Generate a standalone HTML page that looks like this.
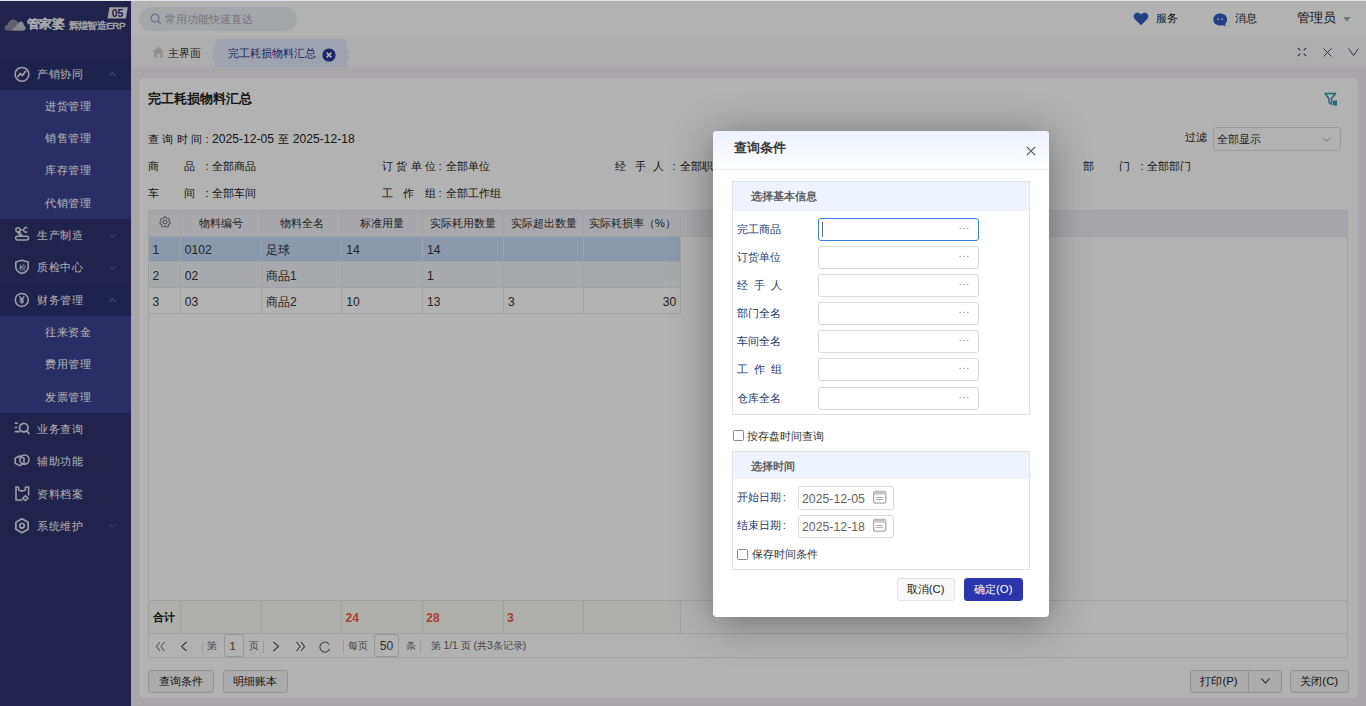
<!DOCTYPE html>
<html><head><meta charset="utf-8">
<style>
*{box-sizing:border-box;margin:0;padding:0}
html,body{width:1366px;height:706px;overflow:hidden;background:#f2f0f2;font-family:"Liberation Sans",sans-serif;}
.a{position:absolute;white-space:nowrap}
#root{position:absolute;left:0;top:0;width:1366px;height:706px;overflow:hidden}
/* sidebar */
#side{position:absolute;left:0;top:0;width:131px;height:706px;background:#30336f}
.mi{position:absolute;left:0;width:131px;height:32.3px;color:#fafaff;font-size:11.4px;line-height:32.3px}
.mi .t{position:absolute;left:37px;top:0;letter-spacing:0.5px}
.sub{position:absolute;left:0;width:131px;background:#3e4290}
.si{position:absolute;left:45px;color:#ffffff;font-size:11.4px;line-height:32.3px;letter-spacing:0.5px}
.car{position:absolute;left:109px;width:7px;height:7px}
#topbar{position:absolute;left:131px;top:0;width:1235px;height:35.5px;background:#ffffff;border-top:1px solid #fff}
#tabbar{position:absolute;left:131px;top:35.5px;width:1235px;height:31px;background:#f9f9f9}
#card{position:absolute;left:139px;top:78px;width:1219px;height:619.5px;background:#fff;border-radius:5px}
.txt{font-size:11.4px;color:#333}
.th{position:absolute;top:209.4px;height:26.6px;line-height:26.6px;font-size:11.4px;color:#333;text-align:center}
.vl{position:absolute;width:1px;background:#e2e2e2}
.hl{position:absolute;height:1px;background:#e2e2e2}
.cell{position:absolute;font-size:11.4px;color:#333;line-height:26px}
#overlay{position:absolute;left:0;top:0;width:1366px;height:706px;background:rgba(0,0,0,0.3)}
#modal{position:absolute;left:713px;top:131px;width:336px;height:486px;background:#fff;border-radius:4px;box-shadow:0 5px 40px rgba(0,0,0,0.38)}
.lbl{position:absolute;left:24px;font-size:11.4px;color:#34446e;line-height:23px}
.inp{position:absolute;left:105px;width:161px;height:23px;border:1px solid #dcdcdc;border-radius:3px;background:#fff}
.inp .dots{position:absolute;right:9px;top:4px;font-size:10px;color:#aaa;letter-spacing:0.5px}
</style></head><body>
<div id="root">
<!-- SIDEBAR -->

<div id="side">
 <!-- logo -->
 <svg class="a" style="left:3.5px;top:17px" width="22" height="14" viewBox="0 0 22 14">
  <path d="M3.5 13.5 C1.2 13.5 0.2 11.6 0.8 10 C1.3 8.6 2.5 8 3.6 8.1 C3.8 5 6 2.5 9.2 2.5 C11.5 2.5 13.2 3.8 14 5.6 C14.8 4.6 16.2 4.3 17.4 4.8 C19 5.4 19.8 7 19.6 8.6 C21 8.9 21.8 10.3 21.4 11.8 C21.1 12.8 20.3 13.5 19.2 13.5 Z" fill="#8a8ca6"/>
  <path d="M7.5 13.5 L15.5 5.6 C16.3 4.8 17.6 4.6 18.5 5.2 C19.5 5.9 19.9 7.2 19.6 8.6 C21 8.9 21.8 10.3 21.4 11.8 C21.1 12.8 20.3 13.5 19.2 13.5 Z" fill="#c2c3d0"/>
 </svg>
 <div class="a" style="left:26.5px;top:15.5px;font-size:13.4px;color:#f4f5fa;letter-spacing:-0.4px;line-height:16px;-webkit-text-stroke:0.7px #f4f5fa;transform:scaleY(0.92);transform-origin:0 100%">管家婆</div>
 <div class="a" style="left:68.5px;top:19.5px;font-size:9.9px;color:#eeeff5;line-height:12px;letter-spacing:-0.55px;-webkit-text-stroke:0.35px #eeeff5">辉煌智造ERP</div>
 <svg class="a" style="left:106.5px;top:6.5px" width="21" height="12" viewBox="0 0 21 12">
  <path d="M2.5 0.3 H20.8 L18.8 11.5 H0.5 Z" fill="#e4e6ee"/>
  <text x="10.5" y="10" text-anchor="middle" font-family="Liberation Sans" font-weight="bold" font-size="11" fill="#2a2c5e" transform="scale(0.95,1)" transform-origin="10.5 6">05</text>
 </svg>

 <!-- 产销协同 -->
 <div class="mi" style="top:57.7px;background:#2f3270">
  <svg class="a" style="left:12.5px;top:7px" width="18" height="18" viewBox="0 0 18 18"><circle cx="9" cy="9.3" r="6.9" fill="none" stroke="#e2e3ee" stroke-width="1.55"/><path d="M4.6 12.2 L7.2 8.4 L9.4 10.6 L12.3 6.6" fill="none" stroke="#e2e3ee" stroke-width="1.65" stroke-linejoin="round"/><circle cx="12.6" cy="6.3" r="0.9" fill="#e2e3ee"/></svg>
  <div class="t">产销协同</div>
  <svg class="car" style="top:13.5px" viewBox="0 0 8 8"><path d="M0.5 5.5 L4 2 L7.5 5.5" fill="none" stroke="#8c8eaa" stroke-width="1.1"/></svg>
 </div>
 <div class="sub" style="top:89.9px;height:129.2px">
  <div class="si" style="top:0">进货管理</div>
  <div class="si" style="top:32.3px">销售管理</div>
  <div class="si" style="top:64.6px">库存管理</div>
  <div class="si" style="top:96.9px">代销管理</div>
 </div>
 <div class="mi" style="top:219.1px">
  <svg class="a" style="left:12.5px;top:7px" width="18" height="18" viewBox="0 0 18 18"><circle cx="5" cy="3.8" r="2.1" fill="none" stroke="#e2e3ee" stroke-width="1.45"/><path d="M6.2 5.6 L9.6 10.6 M4.6 6.2 L7.6 10.6" fill="none" stroke="#e2e3ee" stroke-width="1.45"/><path d="M14.3 2.2 A2.2 2.2 0 1 0 14.3 5.6" fill="none" stroke="#e2e3ee" stroke-width="1.45"/><path d="M7 3.9 H9.8" stroke="#e2e3ee" stroke-width="1.45"/><rect x="2.6" y="10.3" width="13" height="3.6" rx="1.8" fill="none" stroke="#e2e3ee" stroke-width="1.45"/></svg>
  <div class="t">生产制造</div>
  <svg class="car" style="top:12.5px" viewBox="0 0 8 8"><path d="M0.5 2.5 L4 6 L7.5 2.5" fill="none" stroke="#6f7194" stroke-width="1.1"/></svg>
 </div>
 <div class="mi" style="top:251.4px">
  <svg class="a" style="left:12.5px;top:7px" width="18" height="18" viewBox="0 0 18 18"><path d="M9 2.2 L15.2 4 V9 C15.2 12 12.6 14.3 9 15.6 C5.4 14.3 2.8 12 2.8 9 V4 Z" fill="none" stroke="#e2e3ee" stroke-width="1.55" stroke-linejoin="round"/><text x="9" y="11.6" text-anchor="middle" font-size="7" fill="#e2e3ee">检</text></svg>
  <div class="t">质检中心</div>
  <svg class="car" style="top:12.5px" viewBox="0 0 8 8"><path d="M0.5 2.5 L4 6 L7.5 2.5" fill="none" stroke="#6f7194" stroke-width="1.1"/></svg>
 </div>
 <div class="mi" style="top:283.7px;background:#2f3270">
  <svg class="a" style="left:12.5px;top:7px" width="18" height="18" viewBox="0 0 18 18"><circle cx="8.8" cy="8.9" r="6.5" fill="none" stroke="#e2e3ee" stroke-width="1.55"/><path d="M6.3 5.2 L8.8 8.4 L11.3 5.2 M8.8 8.4 V12.8 M6.6 8.9 H11 M6.6 10.8 H11" fill="none" stroke="#e2e3ee" stroke-width="1.35"/></svg>
  <div class="t">财务管理</div>
  <svg class="car" style="top:13.5px" viewBox="0 0 8 8"><path d="M0.5 5.5 L4 2 L7.5 5.5" fill="none" stroke="#8c8eaa" stroke-width="1.1"/></svg>
 </div>
 <div class="sub" style="top:316px;height:96.9px">
  <div class="si" style="top:0">往来资金</div>
  <div class="si" style="top:32.3px">费用管理</div>
  <div class="si" style="top:64.6px">发票管理</div>
 </div>
 <div class="mi" style="top:412.9px">
  <svg class="a" style="left:12.5px;top:7px" width="18" height="18" viewBox="0 0 18 18"><path d="M1.8 3.2 H5 M1.8 7.4 H4.2 M1.8 11.6 H7" fill="none" stroke="#e2e3ee" stroke-width="1.55"/><circle cx="10.8" cy="7.6" r="4.3" fill="none" stroke="#e2e3ee" stroke-width="1.65"/><path d="M13.8 10.9 L16 13.6" stroke="#e2e3ee" stroke-width="1.70" stroke-linecap="round"/></svg>
  <div class="t">业务查询</div>
 </div>
 <div class="mi" style="top:445.2px">
  <svg class="a" style="left:12.5px;top:7px" width="18" height="18" viewBox="0 0 18 18"><path d="M6.6 4 L11 6.3 V11.3 L6.6 13.6 L2.2 11.3 V6.3 Z" fill="none" stroke="#e2e3ee" stroke-width="1.55" stroke-linejoin="round"/><circle cx="11.4" cy="7.6" r="4.6" fill="none" stroke="#e2e3ee" stroke-width="1.55"/></svg>
  <div class="t">辅助功能</div>
 </div>
 <div class="mi" style="top:477.5px">
  <svg class="a" style="left:12.5px;top:7px" width="18" height="18" viewBox="0 0 18 18"><path d="M5.6 1.9 H3 V15 H9.5 M15.6 10.5 V1.9 H12.4" fill="none" stroke="#e2e3ee" stroke-width="1.55"/><path d="M5.6 1.9 V4.6 C5.6 6.3 12.4 6.3 12.4 4.6 V1.9" fill="none" stroke="#e2e3ee" stroke-width="1.55"/><path d="M12.4 10.8 L15 13.2 L12.4 15.6 L9.8 13.2 Z" fill="none" stroke="#e2e3ee" stroke-width="1.45"/></svg>
  <div class="t">资料档案</div>
 </div>
 <div class="mi" style="top:509.8px">
  <svg class="a" style="left:12.5px;top:7px" width="18" height="18" viewBox="0 0 18 18"><path d="M9 1.8 L15.1 5.3 V12.3 L9 15.8 L2.9 12.3 V5.3 Z" fill="none" stroke="#e2e3ee" stroke-width="1.65" stroke-linejoin="round"/><circle cx="9" cy="8.8" r="2.3" fill="none" stroke="#e2e3ee" stroke-width="1.65"/></svg>
  <div class="t">系统维护</div>
  <svg class="car" style="top:12.5px" viewBox="0 0 8 8"><path d="M0.5 2.5 L4 6 L7.5 2.5" fill="none" stroke="#6f7194" stroke-width="1.1"/></svg>
 </div>
</div>

<!-- TOPBAR -->

<div id="topbar">
 <div class="a" style="left:8px;top:5.5px;width:158px;height:24px;border-radius:12px;background:#eceef4"></div>
 <svg class="a" style="left:18.5px;top:11.5px" width="12" height="12" viewBox="0 0 12 12"><circle cx="5" cy="5" r="3.9" fill="none" stroke="#9aa2c4" stroke-width="1.2"/><path d="M7.8 7.8 L10.8 10.8" stroke="#9aa2c4" stroke-width="1.3"/></svg>
 <div class="a" style="left:33.5px;top:11px;font-size:11.4px;line-height:14px;color:#a8a8ae">常用功能快速直达</div>
 <svg class="a" style="left:1002px;top:10.8px" width="16" height="14" viewBox="0 0 16 14"><path d="M8 13.3 L1.6 6.9 C0 5.2 0.4 2.2 2.7 1.1 C4.6 0.3 6.6 0.9 8 2.5 C9.4 0.9 11.4 0.3 13.3 1.1 C15.6 2.2 16 5.2 14.4 6.9 Z" fill="#2e5dbc"/><path d="M3.6 5.6 L6 3.3" stroke="#b3b3b3" stroke-width="1.2" stroke-linecap="round" opacity="0.0"/></svg>
 <div class="a" style="left:1025px;top:10px;font-size:11.4px;line-height:14px;color:#222">服务</div>
 <svg class="a" style="left:1081.5px;top:11.5px" width="15" height="14" viewBox="0 0 15 14"><path d="M7.2 0.4 C11.2 0.4 14.1 3 14.1 6.4 C14.1 8.3 13.3 9.8 12 10.9 L13 13.4 L9.6 12.3 C8.8 12.5 8 12.6 7.2 12.6 C3.2 12.6 0.3 9.9 0.3 6.5 C0.3 3.1 3.2 0.4 7.2 0.4 Z" fill="#2e5dbc"/><rect x="4.3" y="5.4" width="1.6" height="1.6" fill="#dfe3ee"/><rect x="8.5" y="5.4" width="1.6" height="1.6" fill="#dfe3ee"/></svg>
 <div class="a" style="left:1104px;top:10px;font-size:11.4px;line-height:14px;color:#222">消息</div>
 <div class="a" style="left:1166px;top:9px;font-size:13.3px;line-height:15px;color:#222">管理员</div>
 <svg class="a" style="left:1211.5px;top:15.5px" width="8" height="5" viewBox="0 0 8 5"><path d="M0 0 H8 L4 4.5 Z" fill="#a3a8c0"/></svg>
</div>
<div id="tabbar">
 <svg class="a" style="left:20.5px;top:10.5px" width="13" height="12" viewBox="0 0 13 12"><path d="M6.5 0.5 L0.5 6 H2.3 V11.5 H5.2 V8 H7.8 V11.5 H10.7 V6 H12.5 Z" fill="#d2d2d2"/></svg>
 <div class="a" style="left:37px;top:10px;font-size:11.4px;line-height:14px;color:#333">主界面</div>
 <div class="a" style="left:82px;top:14.5px;width:1px;height:9px;background:#ddd"></div>
 <div class="a" style="left:83.5px;top:3.5px;width:132.5px;height:27.5px;background:#e4e8fb;border-radius:6px 6px 0 0"></div>
 <div class="a" style="left:96.5px;top:10px;font-size:11.4px;line-height:14px;color:#2d3590">完工耗损物料汇总</div>
 <svg class="a" style="left:190.5px;top:12px" width="14" height="14" viewBox="0 0 14 14"><circle cx="7" cy="7" r="6.6" fill="#2a3595"/><path d="M4.6 4.6 L9.4 9.4 M9.4 4.6 L4.6 9.4" stroke="#fff" stroke-width="1.6"/></svg>
 <div class="a" style="left:216.5px;top:14.5px;width:1px;height:9px;background:#ddd"></div>
 <svg class="a" style="left:1166px;top:11.5px" width="10" height="10" viewBox="0 0 10 10"><path d="M0.8 0.8 L3.3 3.3 M9.2 0.8 L6.7 3.3 M0.8 9.2 L3.3 6.7 M9.2 9.2 L6.7 6.7" stroke="#4a4e62" stroke-width="1.2"/></svg>
 <svg class="a" style="left:1192px;top:12px" width="9" height="9" viewBox="0 0 9 9"><path d="M0.5 0.5 L8.5 8.5 M8.5 0.5 L0.5 8.5" stroke="#4a4e62" stroke-width="1"/></svg>
 <svg class="a" style="left:1217px;top:12.5px" width="11" height="8" viewBox="0 0 11 8"><path d="M0.5 0.5 L5.5 7.5 L10.5 0.5" fill="none" stroke="#4a4e62" stroke-width="1"/></svg>
</div>

<!-- CARD -->
<div class="a" style="left:139px;top:78px;width:1219px;height:619.5px;background:#fff;border-radius:5px"></div>
<div class="a" style="left:148px;top:90px;font-size:13.3px;line-height:17px;color:#222;font-weight:bold">完工耗损物料汇总</div>
<svg class="a" style="left:1324px;top:92px" width="14" height="14" viewBox="0 0 14 14"><path d="M1 1.5 H11.5 L7.5 6.5 V12.5 L5 10.5 V6.5 Z" fill="none" stroke="#2a97a8" stroke-width="1.5" stroke-linejoin="round"/><rect x="9" y="8.5" width="4" height="5" fill="#2a97a8"/></svg>
<div class="a" style="left:148px;top:132px;font-size:11.4px;line-height:14px;color:#222;">查</div>
<div class="a" style="left:161.7px;top:132px;font-size:11.4px;line-height:14px;color:#222;">询</div>
<div class="a" style="left:177px;top:132px;font-size:11.4px;line-height:14px;color:#222;">时</div>
<div class="a" style="left:190.7px;top:132px;font-size:11.4px;line-height:14px;color:#222;">间</div>
<div class="a" style="left:205.5px;top:132px;font-size:11.4px;line-height:14px;color:#222;">:</div>
<div class="a" style="left:212px;top:132px;font-size:12.1px;line-height:14px;color:#222;">2025-12-05</div>
<div class="a" style="left:278.2px;top:132px;font-size:11.4px;line-height:14px;color:#222;">至</div>
<div class="a" style="left:292.8px;top:132px;font-size:12.1px;line-height:14px;color:#222;">2025-12-18</div>
<div class="a" style="left:148px;top:159px;font-size:11.4px;line-height:14px;color:#222;">商</div>
<div class="a" style="left:183.5px;top:159px;font-size:11.4px;line-height:14px;color:#222;">品</div>
<div class="a" style="left:205.5px;top:159px;font-size:11.4px;line-height:14px;color:#222;">:</div>
<div class="a" style="left:212px;top:159px;font-size:11.4px;line-height:14px;color:#222;">全部商品</div>
<div class="a" style="left:148px;top:186px;font-size:11.4px;line-height:14px;color:#222;">车</div>
<div class="a" style="left:183.5px;top:186px;font-size:11.4px;line-height:14px;color:#222;">间</div>
<div class="a" style="left:205.5px;top:186px;font-size:11.4px;line-height:14px;color:#222;">:</div>
<div class="a" style="left:212px;top:186px;font-size:11.4px;line-height:14px;color:#222;">全部车间</div>
<div class="a" style="left:381.5px;top:159px;font-size:11.4px;line-height:14px;color:#222;">订</div>
<div class="a" style="left:396px;top:159px;font-size:11.4px;line-height:14px;color:#222;">货</div>
<div class="a" style="left:410.5px;top:159px;font-size:11.4px;line-height:14px;color:#222;">单</div>
<div class="a" style="left:425px;top:159px;font-size:11.4px;line-height:14px;color:#222;">位</div>
<div class="a" style="left:438.5px;top:159px;font-size:11.4px;line-height:14px;color:#222;">:</div>
<div class="a" style="left:445.5px;top:159px;font-size:11.4px;line-height:14px;color:#222;">全部单位</div>
<div class="a" style="left:381.5px;top:186px;font-size:11.4px;line-height:14px;color:#222;">工</div>
<div class="a" style="left:403px;top:186px;font-size:11.4px;line-height:14px;color:#222;">作</div>
<div class="a" style="left:425px;top:186px;font-size:11.4px;line-height:14px;color:#222;">组</div>
<div class="a" style="left:438.5px;top:186px;font-size:11.4px;line-height:14px;color:#222;">:</div>
<div class="a" style="left:445.5px;top:186px;font-size:11.4px;line-height:14px;color:#222;">全部工作组</div>
<div class="a" style="left:615px;top:159px;font-size:11.4px;line-height:14px;color:#222;">经</div>
<div class="a" style="left:634.5px;top:159px;font-size:11.4px;line-height:14px;color:#222;">手</div>
<div class="a" style="left:653px;top:159px;font-size:11.4px;line-height:14px;color:#222;">人</div>
<div class="a" style="left:672.5px;top:159px;font-size:11.4px;line-height:14px;color:#222;">:</div>
<div class="a" style="left:679.5px;top:159px;font-size:11.4px;line-height:14px;color:#222;">全部职员</div>
<div class="a" style="left:1083px;top:159px;font-size:11.4px;line-height:14px;color:#222;">部</div>
<div class="a" style="left:1118.5px;top:159px;font-size:11.4px;line-height:14px;color:#222;">门</div>
<div class="a" style="left:1140.5px;top:159px;font-size:11.4px;line-height:14px;color:#222;">:</div>
<div class="a" style="left:1147px;top:159px;font-size:11.4px;line-height:14px;color:#222;">全部部门</div>
<div class="a" style="left:1185px;top:130.2px;font-size:11.4px;line-height:14px;color:#222;">过滤</div>
<div class="a" style="left:1212.5px;top:127.4px;width:128.5px;height:24px;border:1px solid #dedede;border-radius:3px;background:#fff"></div>
<div class="a" style="left:1216.5px;top:132px;font-size:11.4px;line-height:14px;color:#333;">全部显示</div>
<svg class="a" style="left:1322px;top:136.5px" width="9" height="6" viewBox="0 0 9 6"><path d="M0.5 0.5 L4.5 4.5 L8.5 0.5" fill="none" stroke="#aaa" stroke-width="1"/></svg>
<div class="a" style="left:148.1px;top:210px;width:1200.3px;height:26px;background:#f1f1f7"></div>
<div class="a" style="left:148.1px;top:236px;width:532.6px;height:25px;background:#c6dbf6"></div>
<div class="a" style="left:148.1px;top:261px;width:532.6px;height:26.3px;background:#f1f2f7"></div>
<div class="a" style="left:148.1px;top:600.7px;width:532.6px;height:32.8px;background:#fbfcf6"></div>
<div class="a" style="left:148.1px;top:210px;width:1200.3px;height:448.2px;border:1px solid #e9e9e9"></div>
<div class="a" style="left:148.1px;top:235.5px;width:1200.3px;height:1px;background:#e9e9e9"></div>
<div class="a" style="left:148.1px;top:260.5px;width:532.6px;height:1px;background:#e9e9e9"></div>
<div class="a" style="left:148.1px;top:286.8px;width:532.6px;height:1px;background:#e9e9e9"></div>
<div class="a" style="left:148.1px;top:313.1px;width:532.6px;height:1px;background:#e9e9e9"></div>
<div class="a" style="left:148.1px;top:600.2px;width:1200.3px;height:1px;background:#e9e9e9"></div>
<div class="a" style="left:148.1px;top:633px;width:1200.3px;height:1px;background:#e9e9e9"></div>
<div class="a" style="left:179.8px;top:210px;width:1px;height:103.6px;background:#e9e9e9"></div>
<div class="a" style="left:179.8px;top:600.7px;width:1px;height:32.8px;background:#e9e9e9"></div>
<div class="a" style="left:261.1px;top:210px;width:1px;height:103.6px;background:#e9e9e9"></div>
<div class="a" style="left:261.1px;top:600.7px;width:1px;height:32.8px;background:#e9e9e9"></div>
<div class="a" style="left:341.3px;top:210px;width:1px;height:103.6px;background:#e9e9e9"></div>
<div class="a" style="left:341.3px;top:600.7px;width:1px;height:32.8px;background:#e9e9e9"></div>
<div class="a" style="left:422.1px;top:210px;width:1px;height:103.6px;background:#e9e9e9"></div>
<div class="a" style="left:422.1px;top:600.7px;width:1px;height:32.8px;background:#e9e9e9"></div>
<div class="a" style="left:503px;top:210px;width:1px;height:103.6px;background:#e9e9e9"></div>
<div class="a" style="left:503px;top:600.7px;width:1px;height:32.8px;background:#e9e9e9"></div>
<div class="a" style="left:583.3px;top:210px;width:1px;height:103.6px;background:#e9e9e9"></div>
<div class="a" style="left:583.3px;top:600.7px;width:1px;height:32.8px;background:#e9e9e9"></div>
<div class="a" style="left:680.2px;top:210px;width:1px;height:103.6px;background:#e9e9e9"></div>
<div class="a" style="left:680.2px;top:600.7px;width:1px;height:32.8px;background:#e9e9e9"></div>
<svg class="a" style="left:158.5px;top:215.8px" width="12" height="12" viewBox="0 0 12 12"><path d="M6 0.8 L7.2 1 L7.5 2.3 L8.6 2.9 L9.9 2.4 L10.7 3.4 L10 4.6 L10.2 5.9 L11.3 6.6 L11 7.8 L9.7 8.1 L9.1 9.2 L9.5 10.5 L8.5 11.2 L7.4 10.4 L6 10.6 L4.6 10.4 L3.5 11.2 L2.5 10.5 L2.9 9.2 L2.3 8.1 L1 7.8 L0.7 6.6 L1.8 5.9 L2 4.6 L1.3 3.4 L2.1 2.4 L3.4 2.9 L4.5 2.3 L4.8 1 Z" fill="none" stroke="#555" stroke-width="0.9" stroke-linejoin="round"/><circle cx="6" cy="6" r="2" fill="none" stroke="#555" stroke-width="0.9"/></svg>
<div class="a" style="left:180.3px;top:210px;width:81.3px;height:26px;line-height:26px;font-size:11.4px;color:#333;text-align:center">物料编号</div>
<div class="a" style="left:261.6px;top:210px;width:80.2px;height:26px;line-height:26px;font-size:11.4px;color:#333;text-align:center">物料全名</div>
<div class="a" style="left:341.8px;top:210px;width:80.8px;height:26px;line-height:26px;font-size:11.4px;color:#333;text-align:center">标准用量</div>
<div class="a" style="left:422.6px;top:210px;width:80.9px;height:26px;line-height:26px;font-size:11.4px;color:#333;text-align:center">实际耗用数量</div>
<div class="a" style="left:503.5px;top:210px;width:80.3px;height:26px;line-height:26px;font-size:11.4px;color:#333;text-align:center">实际超出数量</div>
<div class="a" style="left:583.8px;top:210px;width:96.9px;height:26px;line-height:26px;font-size:11.4px;color:#333;text-align:center">实际耗损率（%）</div>
<div class="a" style="left:152.6px;top:238px;line-height:25px;font-size:12.1px;color:#333">1</div>
<div class="a" style="left:184.8px;top:238px;line-height:25px;font-size:12.1px;color:#333">0102</div>
<div class="a" style="left:266.1px;top:238px;line-height:25px;font-size:12.1px;color:#333">足球</div>
<div class="a" style="left:346.3px;top:238px;line-height:25px;font-size:12.1px;color:#333">14</div>
<div class="a" style="left:427.1px;top:238px;line-height:25px;font-size:12.1px;color:#333">14</div>
<div class="a" style="left:152.6px;top:263px;line-height:26.3px;font-size:12.1px;color:#333">2</div>
<div class="a" style="left:184.8px;top:263px;line-height:26.3px;font-size:12.1px;color:#333">02</div>
<div class="a" style="left:266.1px;top:263px;line-height:26.3px;font-size:12.1px;color:#333">商品1</div>
<div class="a" style="left:427.1px;top:263px;line-height:26.3px;font-size:12.1px;color:#333">1</div>
<div class="a" style="left:152.6px;top:289.3px;line-height:26.3px;font-size:12.1px;color:#333">3</div>
<div class="a" style="left:184.8px;top:289.3px;line-height:26.3px;font-size:12.1px;color:#333">03</div>
<div class="a" style="left:266.1px;top:289.3px;line-height:26.3px;font-size:12.1px;color:#333">商品2</div>
<div class="a" style="left:346.3px;top:289.3px;line-height:26.3px;font-size:12.1px;color:#333">10</div>
<div class="a" style="left:427.1px;top:289.3px;line-height:26.3px;font-size:12.1px;color:#333">13</div>
<div class="a" style="left:508px;top:289.3px;line-height:26.3px;font-size:12.1px;color:#333">3</div>
<div class="a" style="left:583.8px;top:289.3px;width:96.9px;line-height:26.3px;font-size:12.1px;color:#333;text-align:right;padding-right:4.5px">30</div>
<div class="a" style="left:153px;top:600.7px;line-height:32.8px;font-size:11.4px;font-weight:bold;color:#222">合计</div>
<div class="a" style="left:345.5px;top:601.5px;line-height:32.8px;font-size:12.1px;font-weight:bold;color:#f25a4a">24</div>
<div class="a" style="left:426.3px;top:601.5px;line-height:32.8px;font-size:12.1px;font-weight:bold;color:#f25a4a">28</div>
<div class="a" style="left:507px;top:601.5px;line-height:32.8px;font-size:12.1px;font-weight:bold;color:#f25a4a">3</div>
<svg class="a" style="left:154.5px;top:641px" width="11" height="11" viewBox="0 0 11 11"><path d="M5 1 L1.5 5.5 L5 10 M9.5 1 L6 5.5 L9.5 10" fill="none" stroke="#7a7f99" stroke-width="1.1"/></svg>
<svg class="a" style="left:180px;top:641px" width="8" height="11" viewBox="0 0 8 11"><path d="M6.5 1 L1.5 5.5 L6.5 10" fill="none" stroke="#555" stroke-width="1.1"/></svg>
<div class="a" style="left:202px;top:641px;width:1px;height:12px;background:#ddd"></div>
<div class="a" style="left:207px;top:634.3px;line-height:24.7px;font-size:10.4px;color:#666">第</div>
<div class="a" style="left:223.5px;top:634.4px;width:20px;height:22.6px;border:1px solid #dadada;border-radius:3px;background:#fff"></div>
<div class="a" style="left:229.5px;top:634.3px;line-height:24.7px;font-size:11.4px;color:#555">1</div>
<div class="a" style="left:248.5px;top:634.3px;line-height:24.7px;font-size:10.4px;color:#666">页</div>
<div class="a" style="left:263px;top:641px;width:1px;height:12px;background:#ddd"></div>
<svg class="a" style="left:272px;top:641px" width="8" height="11" viewBox="0 0 8 11"><path d="M1.5 1 L6.5 5.5 L1.5 10" fill="none" stroke="#555" stroke-width="1.1"/></svg>
<svg class="a" style="left:295px;top:641px" width="11" height="11" viewBox="0 0 11 11"><path d="M1.5 1 L5 5.5 L1.5 10 M6 1 L9.5 5.5 L6 10" fill="none" stroke="#555" stroke-width="1.1"/></svg>
<svg class="a" style="left:318.5px;top:640.5px" width="12" height="12" viewBox="0 0 12 12"><path d="M10.2 3.5 A5 5 0 1 0 10.6 8" fill="none" stroke="#777" stroke-width="1.2"/></svg>
<div class="a" style="left:343px;top:641px;width:1px;height:12px;background:#ddd"></div>
<div class="a" style="left:347.5px;top:634.3px;line-height:24.7px;font-size:10.4px;color:#666">每页</div>
<div class="a" style="left:373.6px;top:634.4px;width:25.8px;height:22.6px;border:1px solid #dadada;border-radius:3px;background:#fff"></div>
<div class="a" style="left:379.7px;top:634.3px;line-height:24.7px;font-size:12.1px;color:#444">50</div>
<div class="a" style="left:405.5px;top:634.3px;line-height:24.7px;font-size:10.4px;color:#666">条</div>
<div class="a" style="left:419.5px;top:641px;width:1px;height:12px;background:#ddd"></div>
<div class="a" style="left:430.5px;top:634.3px;line-height:24.7px;font-size:10.4px;color:#666">第 1/1 页 (共3条记录)</div>
<div class="a" style="left:148.2px;top:670.2px;width:65.4px;height:22.5px;border:1px solid #d6d6d6;border-radius:3px;background:#f7f7f7;text-align:center;line-height:20.5px;font-size:11.4px;color:#222">查询条件</div>
<div class="a" style="left:222.5px;top:670.2px;width:65.1px;height:22.5px;border:1px solid #d6d6d6;border-radius:3px;background:#f7f7f7;text-align:center;line-height:20.5px;font-size:11.4px;color:#222">明细账本</div>
<div class="a" style="left:1190px;top:670.2px;width:92px;height:22.5px;border:1px solid #d6d6d6;border-radius:3px;background:#f7f7f7"></div>
<div class="a" style="left:1248px;top:670.2px;width:1px;height:22.5px;background:#d6d6d6"></div>
<div class="a" style="left:1190px;top:670.2px;width:58px;text-align:center;line-height:22px;font-size:11.4px;color:#222">打印(P)</div>
<svg class="a" style="left:1261px;top:678px" width="9" height="6" viewBox="0 0 9 6"><path d="M0.5 0.5 L4.5 5 L8.5 0.5" fill="none" stroke="#333" stroke-width="1.1"/></svg>
<div class="a" style="left:1290px;top:670.2px;width:58.5px;height:22.5px;border:1px solid #d6d6d6;border-radius:3px;background:#f7f7f7;text-align:center;line-height:20.5px;font-size:11.4px;color:#222">关闭(C)</div>
<div id="overlay"></div>
<div class="a" style="left:0;top:0;width:1366px;height:1px;background:#e6e6ea"></div>
<div id="modal">
<div class="a" style="left:0px;top:0px;width:336px;height:38.5px;border-radius:4px 4px 0 0;background:linear-gradient(#edf1fd,#ffffff);border-bottom:1px solid #ececec"></div>
<div class="a" style="left:20.5px;top:6.5px;font-size:13.3px;line-height:20px;color:#3a3a3a;font-weight:bold">查询条件</div>
<svg class="a" style="left:313px;top:14.5px" width="10" height="10" viewBox="0 0 10 10"><path d="M0.8 0.8 L9.2 9.2 M9.2 0.8 L0.8 9.2" stroke="#5a5a5a" stroke-width="1.2"/></svg>
<div class="a" style="left:19.2px;top:50px;width:297.4px;height:233.7px;border:1px solid #e3e3e3"></div>
<div class="a" style="left:20.2px;top:51px;width:295.4px;height:28.8px;background:#eef3fd"></div>
<div class="a" style="left:38px;top:58px;font-size:11.4px;line-height:14px;color:#555;-webkit-text-stroke:0.35px #555">选择基本信息</div>
<div class="a" style="left:24px;top:86.6px;font-size:11.4px;color:#24386c;line-height:23px">完工商品</div>
<div class="a" style="left:105px;top:86.6px;width:161px;height:23px;border:1px solid #3a7ee6;border-radius:3px;background:#fff"><svg class="a" style="right:9px;top:8px" width="10" height="3" viewBox="0 0 10 3"><circle cx="1.2" cy="1.5" r="0.7" fill="#999"/><circle cx="5" cy="1.5" r="0.7" fill="#999"/><circle cx="8.8" cy="1.5" r="0.7" fill="#999"/></svg></div>
<div class="a" style="left:24px;top:114.75px;font-size:11.4px;color:#24386c;line-height:23px">订货单位</div>
<div class="a" style="left:105px;top:114.75px;width:161px;height:23px;border:1px solid #dcdcdc;border-radius:3px;background:#fff"><svg class="a" style="right:9px;top:8px" width="10" height="3" viewBox="0 0 10 3"><circle cx="1.2" cy="1.5" r="0.7" fill="#999"/><circle cx="5" cy="1.5" r="0.7" fill="#999"/><circle cx="8.8" cy="1.5" r="0.7" fill="#999"/></svg></div>
<div class="a" style="left:24px;top:142.9px;font-size:11.4px;color:#24386c;line-height:23px"><span style="letter-spacing:5.9px">经手人</span></div>
<div class="a" style="left:105px;top:142.9px;width:161px;height:23px;border:1px solid #dcdcdc;border-radius:3px;background:#fff"><svg class="a" style="right:9px;top:8px" width="10" height="3" viewBox="0 0 10 3"><circle cx="1.2" cy="1.5" r="0.7" fill="#999"/><circle cx="5" cy="1.5" r="0.7" fill="#999"/><circle cx="8.8" cy="1.5" r="0.7" fill="#999"/></svg></div>
<div class="a" style="left:24px;top:171.05px;font-size:11.4px;color:#24386c;line-height:23px">部门全名</div>
<div class="a" style="left:105px;top:171.05px;width:161px;height:23px;border:1px solid #dcdcdc;border-radius:3px;background:#fff"><svg class="a" style="right:9px;top:8px" width="10" height="3" viewBox="0 0 10 3"><circle cx="1.2" cy="1.5" r="0.7" fill="#999"/><circle cx="5" cy="1.5" r="0.7" fill="#999"/><circle cx="8.8" cy="1.5" r="0.7" fill="#999"/></svg></div>
<div class="a" style="left:24px;top:199.2px;font-size:11.4px;color:#24386c;line-height:23px">车间全名</div>
<div class="a" style="left:105px;top:199.2px;width:161px;height:23px;border:1px solid #dcdcdc;border-radius:3px;background:#fff"><svg class="a" style="right:9px;top:8px" width="10" height="3" viewBox="0 0 10 3"><circle cx="1.2" cy="1.5" r="0.7" fill="#999"/><circle cx="5" cy="1.5" r="0.7" fill="#999"/><circle cx="8.8" cy="1.5" r="0.7" fill="#999"/></svg></div>
<div class="a" style="left:24px;top:227.35px;font-size:11.4px;color:#24386c;line-height:23px"><span style="letter-spacing:5.9px">工作组</span></div>
<div class="a" style="left:105px;top:227.35px;width:161px;height:23px;border:1px solid #dcdcdc;border-radius:3px;background:#fff"><svg class="a" style="right:9px;top:8px" width="10" height="3" viewBox="0 0 10 3"><circle cx="1.2" cy="1.5" r="0.7" fill="#999"/><circle cx="5" cy="1.5" r="0.7" fill="#999"/><circle cx="8.8" cy="1.5" r="0.7" fill="#999"/></svg></div>
<div class="a" style="left:24px;top:255.5px;font-size:11.4px;color:#24386c;line-height:23px">仓库全名</div>
<div class="a" style="left:105px;top:255.5px;width:161px;height:23px;border:1px solid #dcdcdc;border-radius:3px;background:#fff"><svg class="a" style="right:9px;top:8px" width="10" height="3" viewBox="0 0 10 3"><circle cx="1.2" cy="1.5" r="0.7" fill="#999"/><circle cx="5" cy="1.5" r="0.7" fill="#999"/><circle cx="8.8" cy="1.5" r="0.7" fill="#999"/></svg></div>
<div class="a" style="left:108.5px;top:91.4px;width:1px;height:14.8px;background:#6a6a6a"></div>
<div class="a" style="left:19.5px;top:299.4px;width:11px;height:11px;border:1px solid #888;border-radius:1.5px;background:#fff"></div>
<div class="a" style="left:33.5px;top:297.5px;font-size:11.4px;line-height:14px;color:#333;">按存盘时间查询</div>
<div class="a" style="left:19.2px;top:319.8px;width:297.4px;height:119px;border:1px solid #e3e3e3"></div>
<div class="a" style="left:20.2px;top:320.8px;width:295.4px;height:27.4px;background:#eef3fd"></div>
<div class="a" style="left:38px;top:327.8px;font-size:11.4px;line-height:14px;color:#555;-webkit-text-stroke:0.35px #555">选择时间</div>
<div class="a" style="left:23.5px;top:355.4px;font-size:11.4px;color:#24386c;line-height:23.4px">开始日期<span style="margin-left:2.2px">:</span></div>
<div class="a" style="left:85px;top:355.4px;width:95.5px;height:23.4px;border:1px solid #dcdcdc;border-radius:3px;background:#fff"></div>
<div class="a" style="left:89px;top:356.9px;font-size:12.3px;line-height:23.4px;color:#666">2025-12-05</div>
<svg class="a" style="left:159px;top:359px" width="15" height="14" viewBox="0 0 15 14"><rect x="1.6" y="1.4" width="12.2" height="11.8" rx="1.8" fill="none" stroke="#aaa" stroke-width="1.3"/><rect x="1.6" y="1.4" width="12.2" height="3.2" fill="#c6c6c6"/><path d="M4.2 7.5 H10.6 M3.8 9.6 H11.2" stroke="#aaa" stroke-width="1"/></svg>
<div class="a" style="left:23.5px;top:383.3px;font-size:11.4px;color:#24386c;line-height:23.4px">结束日期<span style="margin-left:2.2px">:</span></div>
<div class="a" style="left:85px;top:383.7px;width:95.5px;height:23.4px;border:1px solid #dcdcdc;border-radius:3px;background:#fff"></div>
<div class="a" style="left:89px;top:385.2px;font-size:12.3px;line-height:23.4px;color:#666">2025-12-18</div>
<svg class="a" style="left:159px;top:387.3px" width="15" height="14" viewBox="0 0 15 14"><rect x="1.6" y="1.4" width="12.2" height="11.8" rx="1.8" fill="none" stroke="#aaa" stroke-width="1.3"/><rect x="1.6" y="1.4" width="12.2" height="3.2" fill="#c6c6c6"/><path d="M4.2 7.5 H10.6 M3.8 9.6 H11.2" stroke="#aaa" stroke-width="1"/></svg>
<div class="a" style="left:23.8px;top:417.8px;width:11px;height:11px;border:1px solid #888;border-radius:1.5px;background:#fff"></div>
<div class="a" style="left:39px;top:416px;font-size:11.4px;line-height:14px;color:#333;">保存时间条件</div>
<div class="a" style="left:183.5px;top:447.2px;width:58.3px;height:22.4px;border:1px solid #e3e3e3;border-radius:3px;background:#f8f8f8;text-align:center;line-height:20.4px;font-size:11.4px;color:#222">取消(C)</div>
<div class="a" style="left:250.9px;top:446.8px;width:58.7px;height:22.8px;border-radius:3.5px;background:#2b36ad;text-align:center;line-height:22.8px;font-size:11.4px;color:#fff">确定(O)</div>
</div>
</div>
</body></html>
